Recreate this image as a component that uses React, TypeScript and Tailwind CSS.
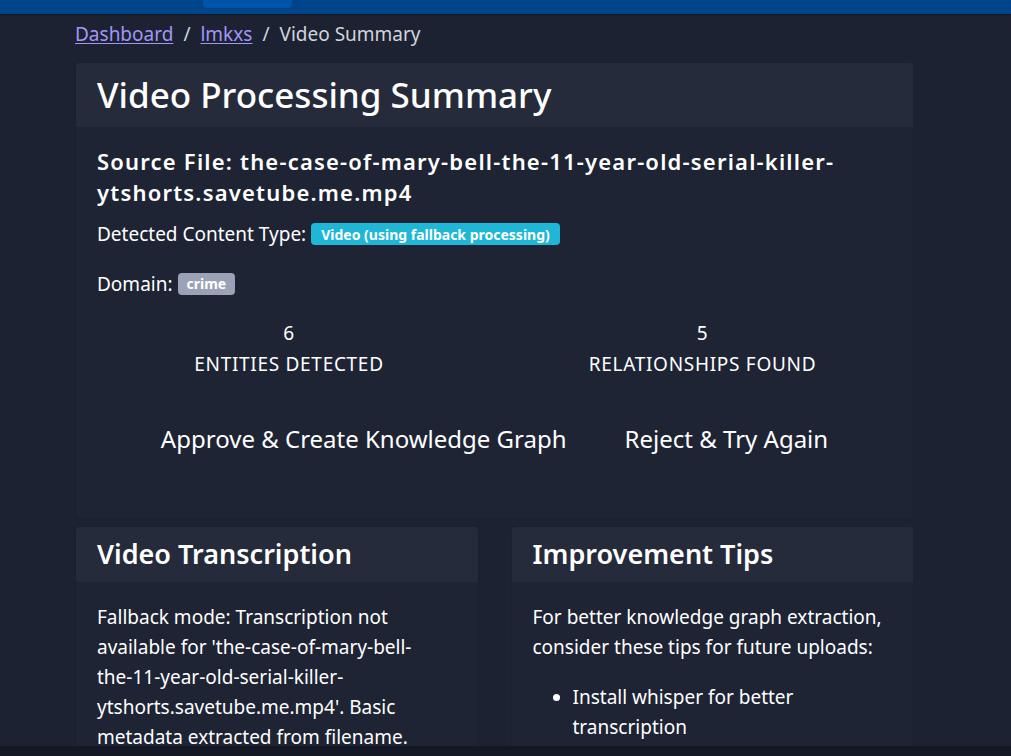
import React from 'react';

const font = { fontFamily: '"Noto Sans", "Open Sans", sans-serif' };

function Stat({ value, label, className }: { value: number; label: string; className: string }) {
  return (
    <div className={`${className} flex flex-col items-center text-[19px] tracking-[0.7px] leading-[31px] text-white`}>
      <span>{value}</span>
      <span>{label}</span>
    </div>
  );
}

function SideCard({ title, bodyPad, children }: { title: string; bodyPad: string; children: React.ReactNode }) {
  return (
    <div className="flex flex-col w-[404px] rounded border border-[#192030] bg-[#1e2434] overflow-hidden">
      <div className="h-[55px] flex items-center px-[21px] bg-[#252b3b]">
        <h2 className="text-[27px] font-semibold text-white">{title}</h2>
      </div>
      <div className={`pl-[21px] ${bodyPad} pt-[20px] text-[19px] leading-[30px] text-white`}>{children}</div>
    </div>
  );
}

export default function App() {
  return (
    <div className="min-h-[756px] h-[756px] overflow-hidden bg-[#1c2232]" style={font}>
      {/* Top nav */}
      <div className="h-[15px] bg-[#00448a] border-b border-[#12161f] flex">
        <div className="ml-[203px] w-[89px] h-[8px] rounded-b bg-[#0054a8]" />
      </div>

      <div className="ml-[75px] w-[839px] flex flex-col">
        {/* Breadcrumb */}
        <nav className="h-[39px] flex items-center gap-[10px] text-[19px] text-[#d1d5db]">
          <a className="text-[#a496f5] underline underline-offset-2">Dashboard</a>
          <span>/</span>
          <a className="text-[#a496f5] underline underline-offset-2">lmkxs</a>
          <span>/</span>
          <span>Video Summary</span>
        </nav>

        {/* Summary card */}
        <div className="mt-[8px] rounded border border-[#192030] bg-[#1e2434] overflow-hidden">
          <div className="h-[64px] flex items-center px-[21px] bg-[#252b3b]">
            <h1 className="text-[35px] font-medium text-white">Video Processing Summary</h1>
          </div>
          <div className="px-[21px] pt-[19px] pb-[61px]">
            <h3 className="text-[22px] tracking-[1.2px] leading-[31px] font-semibold text-white">
              Source File: the-case-of-mary-bell-the-11-year-old-serial-killer-ytshorts.savetube.me.mp4
            </h3>
            <div className="mt-[12px] flex items-center gap-[5px] text-[19px] text-white">
              <span>Detected Content Type:</span>
              <span className="h-[22px] px-[10px] flex items-center rounded bg-[#20b6d6] text-[14px] font-bold text-white">
                Video (using fallback processing)
              </span>
            </div>
            <div className="mt-[21px] flex items-center gap-[5px] text-[19px] text-white">
              <span>Domain:</span>
              <span className="h-[22px] px-[9px] flex items-center rounded bg-[#9ca2b5] text-[14px] font-bold text-white">
                crime
              </span>
            </div>
            <div className="mt-[20px] flex">
              <Stat value={6} label="ENTITIES DETECTED" className="w-[384px] shrink-0" />
              <Stat value={5} label="RELATIONSHIPS FOUND" className="flex-1 pl-[32px]" />
            </div>
            <div className="mt-[41px] flex justify-center gap-[58px] text-[24px] text-white">
              <button>Approve &amp; Create Knowledge Graph</button>
              <button>Reject &amp; Try Again</button>
            </div>
          </div>
        </div>

        {/* Lower cards */}
        <div className="mt-[7px] flex gap-[32px]">
          <SideCard title="Video Transcription" bodyPad="pr-[33px]">
            <p>
              Fallback mode: Transcription not available for 'the-case-of-mary-bell-the-11-year-old-serial-killer-ytshorts.savetube.me.mp4'. Basic metadata extracted from filename.
            </p>
          </SideCard>
          <SideCard title="Improvement Tips" bodyPad="pr-[18px]">
            <p>For better knowledge graph extraction, consider these tips for future uploads:</p>
            <ul className="mt-[20px] pl-[40px] list-disc">
              <li>Install whisper for better transcription</li>
            </ul>
          </SideCard>
        </div>
      </div>

      {/* Bottom scrollbar strip */}
      <div className="fixed bottom-0 left-0 right-0 h-[10px] bg-[#141824]" />
    </div>
  );
}
